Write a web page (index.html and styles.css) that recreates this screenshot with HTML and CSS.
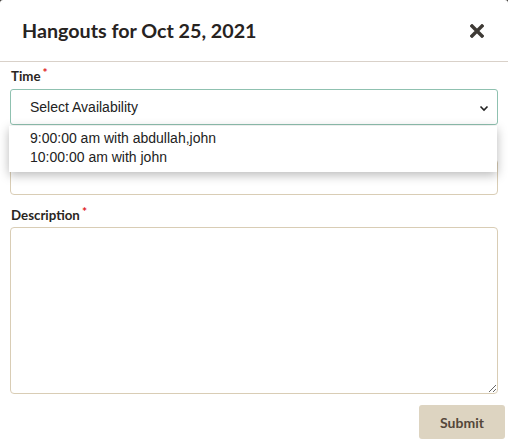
FILE: index.html
```html
<!DOCTYPE html>
<html lang="en">
<head>
<meta charset="utf-8">
<title>Hangouts</title>
<link rel="stylesheet" href="styles.css">
</head>
<body>
<div class="modal">
  <div class="modal-header">
    <h1 class="modal-title">Hangouts for Oct 25, 2021</h1>
    <button class="close" aria-label="Close">
      <svg width="14" height="14" viewBox="0 0 14 14"><path d="M2 2 L12 12 M12 2 L2 12" stroke="#3e3a35" stroke-width="3.4" stroke-linecap="square"/></svg>
    </button>
  </div>
  <form class="modal-body">
    <div class="field">
      <label class="label">Time<span class="req">*</span></label>
      <div class="select-wrap">
        <div class="select">
          <span>Select Availability</span>
          <svg class="chev" width="10" height="7" viewBox="0 0 10 7"><path d="M1.5 1.5 L5 5 L8.5 1.5" fill="none" stroke="#222" stroke-width="1.6"/></svg>
        </div>
        <ul class="menu">
          <li>9:00:00 am with abdullah,john</li>
          <li>10:00:00 am with john</li>
        </ul>
      </div>
    </div>
    <div class="field field-tight">
      <div class="label label-spacer" aria-hidden="true"></div>
      <input class="input" type="text" aria-label="Location">
    </div>
    <div class="field">
      <label class="label label-tight">Description<span class="req">*</span></label>
      <textarea class="textarea"></textarea>
    </div>
    <div class="actions">
      <button type="button" class="submit">Submit</button>
    </div>
  </form>
</div>
</body>
</html>
```

FILE: styles.css
```css
* { box-sizing: border-box; }
html, body { margin: 0; padding: 0; background: #3b3834; }
body { width: 508px; height: 440px; overflow: hidden; }
.modal {
  background: #fff;
  width: 508px;
  height: 443px;
  border-radius: 3px;
  font-family: Lato, "Noto Sans", sans-serif;
  color: #2a2622;
}
.modal-header {
  height: 62px;
  border-bottom: 1px solid #d9d1c9;
  display: flex;
  align-items: center;
  justify-content: space-between;
  padding: 0 24px 0 22px;
}
.modal-title {
  margin: 0;
  font-size: 19.7px;
  font-weight: 700;
  color: #27231f;
  padding-bottom: 1px;
}
.close {
  border: 0;
  background: none;
  padding: 0;
  width: 14px;
  height: 14px;
  display: flex;
  margin-top: 1px;
}
.modal-body {
  padding: 6px 10px 0 10px;
  display: flex;
  flex-direction: column;
}
.field { display: flex; flex-direction: column; margin-bottom: 13px; }
.field-tight { margin-bottom: 12px; }
.label {
  font-size: 13.3px;
  font-weight: 700;
  line-height: 16px;
  height: 16px;
  color: #2a2622;
  margin-bottom: 5px;
  padding-left: 1px;
}
.label-tight { margin-bottom: 4px; }
.req {
  color: #e0191b;
  font-size: 12px;
  line-height: 0;
  position: relative;
  top: -4px;
  margin-left: 2px;
}
.select-wrap { position: relative; }
.select {
  height: 36px;
  border: 1px solid #8fc1b0;
  border-radius: 3px;
  display: flex;
  align-items: center;
  justify-content: space-between;
  padding: 0 8px 0 19px;
  font-family: "Liberation Sans", Arial, sans-serif;
  font-size: 14px;
  color: #222;
}
.chev { margin-top: 2px; }
.menu {
  position: absolute;
  left: -1px;
  right: 1px;
  top: 37px;
  margin: 0;
  padding: 3px 0 5px 0;
  list-style: none;
  background: #fff;
  box-shadow: 0 3px 10px rgba(0,0,0,0.28);
  font-family: "Liberation Sans", Arial, sans-serif;
  font-size: 14px;
  line-height: 19px;
  color: #222;
  z-index: 2;
}
.menu li { padding-left: 21px; }
.input {
  height: 36px;
  border: 1px solid #d9cdb5;
  border-radius: 4px;
  font: inherit;
}
.textarea {
  height: 167px;
  border: 1px solid #d9cdb5;
  border-radius: 4px;
  resize: vertical;
  font: inherit;
}
.actions {
  display: flex;
  justify-content: flex-end;
  margin-top: -2px;
  margin-right: -7px;
}
.submit {
  width: 86px;
  height: 34px;
  border: 0;
  border-radius: 3px;
  background: #ddd4c1;
  color: #54473a;
  font-family: Lato, "Noto Sans", sans-serif;
  font-weight: 700;
  font-size: 14px;
}
```
